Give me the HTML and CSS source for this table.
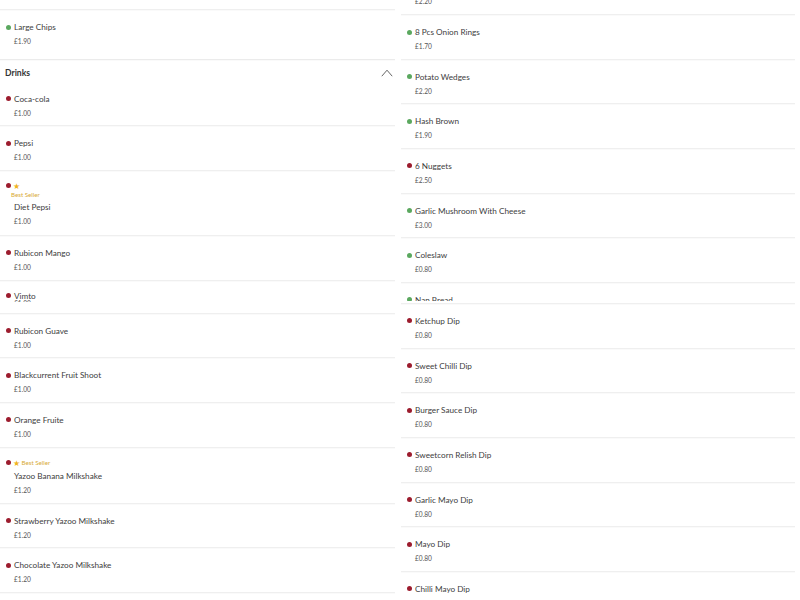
FILE: index.html
```html
<!DOCTYPE html>
<html lang="en">
<head>
<meta charset="utf-8">
<title>Menu</title>
<link rel="stylesheet" href="styles.css">
</head>
<body>
<div class="menu">
  <div class="col">
    <div class="list list-left">
      <div class="item"><div class="name"><span class="dot green"></span>Regular Chips</div><div class="price">£1.50</div></div>
      <div class="item last"><div class="name"><span class="dot green"></span>Large Chips</div><div class="price">£1.90</div></div>
      <div class="cat">
        <span class="cat-title">Drinks</span>
        <svg class="chev" width="12" height="8" viewBox="0 0 12 8"><polyline points="0.8,7.2 6,1.2 11.2,7.2" fill="none" stroke="#555" stroke-width="0.9"/></svg>
      </div>
      <div class="item"><div class="name"><span class="dot red"></span>Coca-cola</div><div class="price">£1.00</div></div>
      <div class="item"><div class="name"><span class="dot red"></span>Pepsi</div><div class="price">£1.00</div></div>
      <div class="item bs-wrap">
        <div class="tag"><span class="dot red"></span><span class="star">★</span></div>
        <div class="bs-line">Best Seller</div>
        <div class="name plain">Diet Pepsi</div>
        <div class="price">£1.00</div>
      </div>
      <div class="item"><div class="name"><span class="dot red"></span>Rubicon Mango</div><div class="price">£1.00</div></div>
      <div class="item squish">
        <div class="clip">
          <div class="name"><span class="dot red"></span>Vimto</div>
          <div class="price">£1.00</div>
        </div>
      </div>
      <div class="item"><div class="name"><span class="dot red"></span>Rubicon Guave</div><div class="price">£1.00</div></div>
      <div class="item"><div class="name"><span class="dot red"></span>Blackcurrent Fruit Shoot</div><div class="price">£1.00</div></div>
      <div class="item"><div class="name"><span class="dot red"></span>Orange Fruite</div><div class="price">£1.00</div></div>
      <div class="item bs">
        <div class="tag"><span class="dot red"></span><span class="star">★</span><span class="bs-text">Best Seller</span></div>
        <div class="name plain">Yazoo Banana Milkshake</div>
        <div class="price">£1.20</div>
      </div>
      <div class="item"><div class="name"><span class="dot red"></span>Strawberry Yazoo Milkshake</div><div class="price">£1.20</div></div>
      <div class="item"><div class="name"><span class="dot red"></span>Chocolate Yazoo Milkshake</div><div class="price">£1.20</div></div>
    </div>
  </div>
  <div class="col">
    <div class="list list-right">
      <div class="item"><div class="name"><span class="dot green"></span>Cheese Chips</div><div class="price">£2.20</div></div>
      <div class="item"><div class="name"><span class="dot green"></span>8 Pcs Onion Rings</div><div class="price">£1.70</div></div>
      <div class="item"><div class="name"><span class="dot green"></span>Potato Wedges</div><div class="price">£2.20</div></div>
      <div class="item"><div class="name"><span class="dot green"></span>Hash Brown</div><div class="price">£1.90</div></div>
      <div class="item"><div class="name"><span class="dot red"></span>6 Nuggets</div><div class="price">£2.50</div></div>
      <div class="item"><div class="name"><span class="dot green"></span>Garlic Mushroom With Cheese</div><div class="price">£3.00</div></div>
      <div class="item"><div class="name"><span class="dot green"></span>Coleslaw</div><div class="price">£0.80</div></div>
      <div class="item short">
        <div class="clip-short">
          <div class="name"><span class="dot green"></span>Nan Bread</div>
        </div>
      </div>
      <div class="item"><div class="name"><span class="dot red"></span>Ketchup Dip</div><div class="price">£0.80</div></div>
      <div class="item"><div class="name"><span class="dot red"></span>Sweet Chilli Dip</div><div class="price">£0.80</div></div>
      <div class="item"><div class="name"><span class="dot red"></span>Burger Sauce Dip</div><div class="price">£0.80</div></div>
      <div class="item"><div class="name"><span class="dot red"></span>Sweetcorn Relish Dip</div><div class="price">£0.80</div></div>
      <div class="item"><div class="name"><span class="dot red"></span>Garlic Mayo Dip</div><div class="price">£0.80</div></div>
      <div class="item"><div class="name"><span class="dot red"></span>Mayo Dip</div><div class="price">£0.80</div></div>
      <div class="item"><div class="name"><span class="dot red"></span>Chilli Mayo Dip</div><div class="price">£0.80</div></div>
    </div>
  </div>
</div>
</body>
</html>
```

FILE: styles.css
```css
* { box-sizing: border-box; }
html, body {
  margin: 0;
  padding: 0;
  background: #ffffff;
}
body {
  width: 800px;
  height: 600px;
  overflow: hidden;
  font-family: Lato, "Open Sans", Arial, sans-serif;
  color: #333333;
}
.menu {
  display: grid;
  grid-template-columns: 395px 394px;
  column-gap: 6px;
  height: 600px;
}
.col {
  overflow: hidden;
  height: 600px;
}
.list-left { margin-top: -34.67px; }
.list-right { margin-top: -29.67px; }

.item {
  padding: 12px 0 7.67px 0;
  border-bottom: 1px solid #efefef;
  box-shadow: 0 1px 1px rgba(0, 0, 0, 0.02);
}
.item.last {
  padding-bottom: 12.67px;
  border-bottom-color: #ebebeb;
}
.name {
  display: flex;
  align-items: center;
  height: 10px;
  line-height: 10px;
  font-size: 8.2px;
  color: #404040;
  padding-left: 6px;
  white-space: nowrap;
}
.name.plain { padding-left: 14px; }
.dot {
  width: 5px;
  height: 5px;
  border-radius: 50%;
  margin-left: -0.5px;
  margin-right: 3.5px;
  flex: none;
}
.dot.red { background: #9c1c2e; }
.dot.green { background: #5ba85f; }
.price {
  margin-top: 4px;
  height: 10px;
  line-height: 10px;
  font-size: 6.6px;
  color: #555555;
  padding-left: 14px;
}

.cat {
  display: flex;
  justify-content: space-between;
  align-items: center;
  height: 22px;
  padding: 8px 2px 4px 5px;
}
.cat-title {
  font-size: 8.6px;
  line-height: 10px;
  font-weight: 700;
  color: #333333;
}
.chev { display: block; }

.tag {
  display: flex;
  align-items: center;
  height: 8px;
  line-height: 8px;
  padding-left: 6px;
}
.tag .dot { margin-right: 2.5px; }
.star {
  font-size: 8px;
  color: #f0b41e;
  line-height: 8px;
}
.bs-text {
  font-size: 6.2px;
  color: #d8aa36;
  margin-left: 1.5px;
}
.item.bs { padding: 11px 0 8px 0; }
.item.bs .name { margin-top: 4px; }

.item.bs-wrap { padding: 11px 0 9px 0; }
.bs-line {
  margin-top: 1px;
  height: 8px;
  line-height: 8px;
  font-size: 6.2px;
  color: #d8aa36;
  padding-left: 11px;
}
.item.bs-wrap .name { margin-top: 3px; }

.item.squish {
  padding: 10px 0 0 0;
  height: 33px;
}
.clip {
  height: 11px;
  overflow: hidden;
}
.clip .price { margin-top: -3px; }

.item.short {
  padding: 12px 0 0 0;
  height: 21px;
}
.clip-short {
  height: 6px;
  overflow: hidden;
}
.clip-short .name { margin-top: 0; }
```
